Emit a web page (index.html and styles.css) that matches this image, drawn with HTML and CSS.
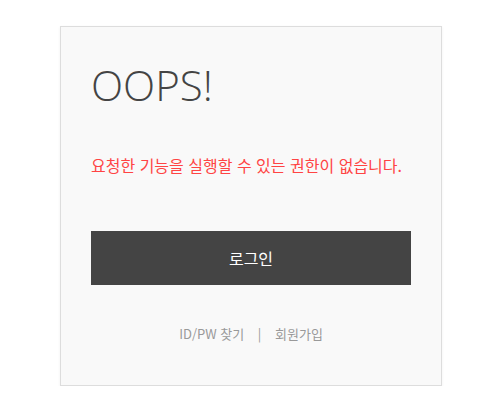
FILE: index.html
```html
<!DOCTYPE html>
<html lang="ko">
<head>
    <meta charset="UTF-8">
    <meta name="viewport" content="width=device-width, initial-scale=1.0">
    <title>권한 없음</title>
    <link rel="stylesheet" href="styles.css">
</head>
<body>

    <div class="error-box">
        <h1>OOPS!</h1>
        <p class="message">요청한 기능을 실행할 수 있는 권한이 없습니다.</p>
        <button class="login-btn">로그인</button>
        <div class="links">
            <a href="#">ID/PW 찾기</a>
            <span class="bar">|</span>
            <a href="#">회원가입</a>
        </div>
    </div>

</body>
</html>
```

FILE: styles.css
```css
body {
    font-family: 'Noto Sans', 'Noto Sans CJK KR', sans-serif;
    background-color: #fff;
    margin: 0;
    padding: 26px 0 0 60px;
}
.error-box {
    width: 320px;
    padding: 30px 30px 41px;
    background-color: #f9f9f9;
    border: 1px solid #ddd;
    box-shadow: 0 1px 3px rgba(0, 0, 0, 0.06);
}
h1 {
    font-family: 'Open Sans', sans-serif;
    font-weight: 300;
    font-size: 42px;
    line-height: 56px;
    color: #444;
    margin: 0;
}
.message {
    font-family: 'Noto Sans CJK KR', sans-serif;
    font-size: 16px;
    line-height: 20px;
    color: #ff4444;
    margin: 42px 0 0 0;
}
.login-btn {
    display: block;
    width: 100%;
    height: 54px;
    margin-top: 56px;
    border: none;
    background-color: #444;
    color: #fff;
    font-family: 'Noto Sans CJK KR', sans-serif;
    font-size: 16px;
    cursor: pointer;
}
.links {
    margin-top: 39px;
    text-align: center;
    font-family: 'Noto Sans CJK KR', sans-serif;
    font-size: 13px;
    line-height: 20px;
    color: #999;
}
.links a {
    color: #999;
    text-decoration: none;
}
.bar {
    margin: 0 10px;
}
```
